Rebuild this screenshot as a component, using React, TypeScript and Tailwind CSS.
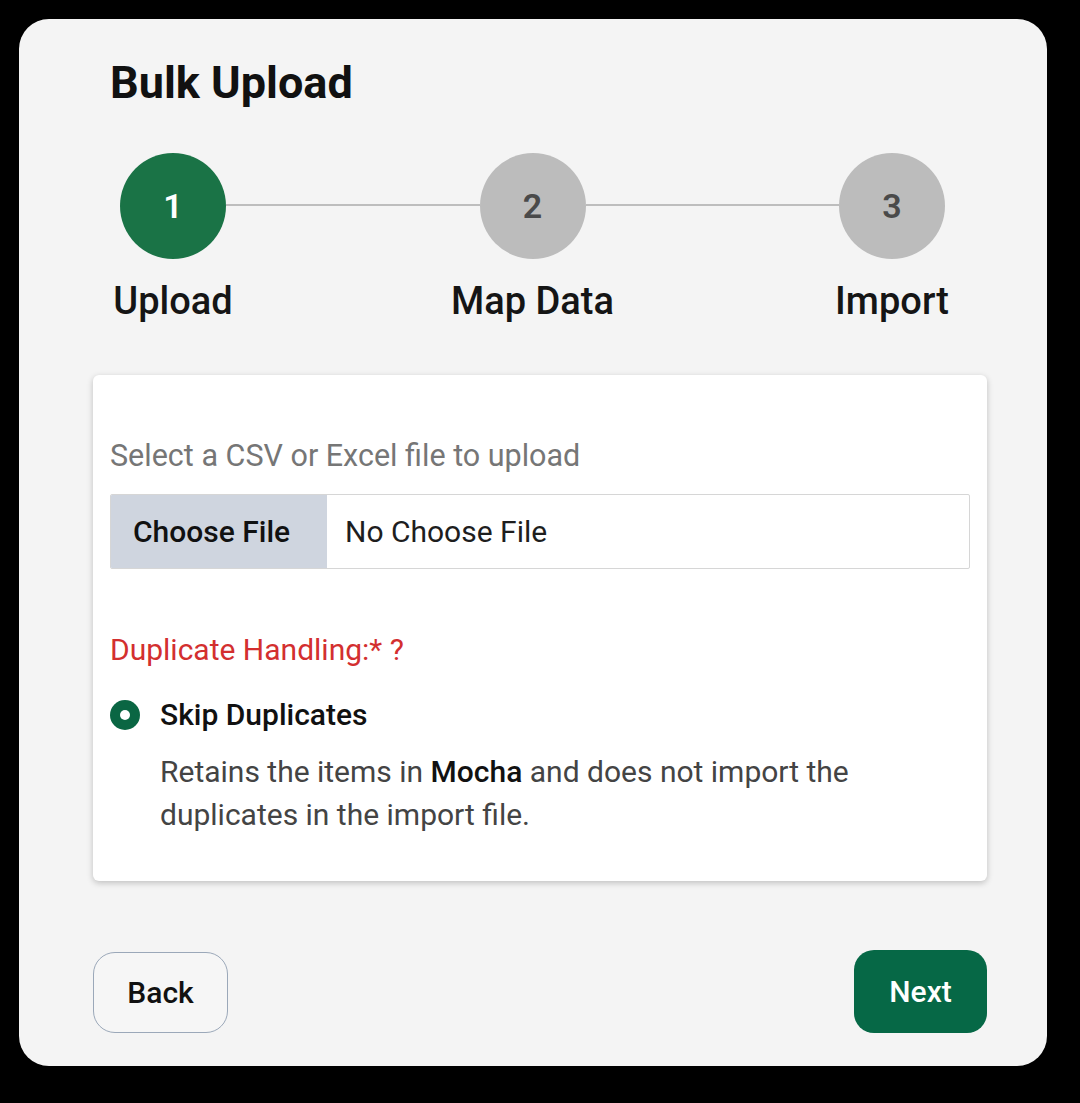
import React, { useState } from 'react';

const steps = [
  { n: 1, label: 'Upload' },
  { n: 2, label: 'Map Data' },
  { n: 3, label: 'Import' },
];

const StepCircle = ({ n, label, active }: { n: number; label: string; active: boolean }) => (
  <div className="flex flex-col items-center w-[106px] shrink-0">
    <div
      className={`w-[106px] h-[106px] rounded-full flex items-center justify-center text-[34px] font-semibold leading-none ${
        active ? 'bg-[#1a7346] text-white' : 'bg-[#bcbcbc] text-[#4a4a4a]'
      }`}
    >
      {n}
    </div>
    <div className="mt-[23px] text-[38px] font-medium leading-none text-[#151515] whitespace-nowrap">{label}</div>
  </div>
);

export default function App() {
  const [mode, setMode] = useState('skip');

  return (
    <div className="min-h-[1103px] bg-black p-[19px] pr-[33px] pb-[37px] font-['Roboto','Liberation_Sans',sans-serif]">
      <div className="h-[1047px] w-[1028px] rounded-[30px] bg-[#f4f4f4] pl-[74px] pr-[60px] pt-[41px] pb-[33px] flex flex-col">
        <h1 className="pl-[17px] text-[45px] font-bold leading-none text-[#111]">Bulk Upload</h1>

        {/* Stepper */}
        <div className="mt-[48px] flex items-start pl-[27px] pr-[42px]">
          {steps.map((s, i) => (
            <React.Fragment key={s.n}>
              <StepCircle n={s.n} label={s.label} active={i === 0} />
              {i < steps.length - 1 && <div className="flex-1 h-[2px] mt-[51px] bg-[#bdbdbd]" />}
            </React.Fragment>
          ))}
        </div>

        {/* Upload card */}
        <div className="mt-[55px] rounded-[6px] bg-white px-[17px] pt-[66px] pb-[45px] shadow-[0_2px_6px_rgba(0,0,0,0.22)]">
          <p className="text-[30.5px] leading-[30px] text-[#767676]">Select a CSV or Excel file to upload</p>

          <div className="mt-[23px] flex h-[75px] border border-[#d6d6d6] rounded-[2px] overflow-hidden">
            <div className="w-[216px] shrink-0 bg-[#cfd5df] flex items-center pl-[22px] text-[30px] font-medium text-[#111]">
              Choose File
            </div>
            <div className="flex items-center pl-[18px] text-[30px] text-[#1e1e1e]">No Choose File</div>
          </div>

          <p className="mt-[66px] text-[30px] leading-none text-[#d32f2f]">Duplicate Handling:* ?</p>

          <label className="mt-[35px] flex items-center cursor-pointer" onClick={() => setMode('skip')}>
            <span className="w-[30px] h-[30px] rounded-full bg-[#0a6643] flex items-center justify-center shrink-0">
              {mode === 'skip' && <span className="w-[10px] h-[10px] rounded-full bg-white" />}
            </span>
            <span className="ml-[20px] text-[30px] font-medium leading-none text-[#111]">Skip Duplicates</span>
          </label>

          <p className="mt-[20px] pl-[50px] pr-[8px] text-[30px] leading-[43px] text-[#444]">
            Retains the items in <span className="font-medium text-[#111]">Mocha</span> and does not import the
            duplicates in the import file.
          </p>
        </div>

        {/* Footer */}
        <div className="mt-auto flex items-end justify-between">
          <button className="w-[135px] h-[81px] rounded-[22px] border-[1.5px] border-[#9ba8b9] bg-[#f6f6f6] text-[30px] font-medium text-[#111]">
            Back
          </button>
          <button className="w-[133px] h-[83px] rounded-[20px] bg-[#066846] text-[30px] font-medium text-white">
            Next
          </button>
        </div>
      </div>
    </div>
  );
}
